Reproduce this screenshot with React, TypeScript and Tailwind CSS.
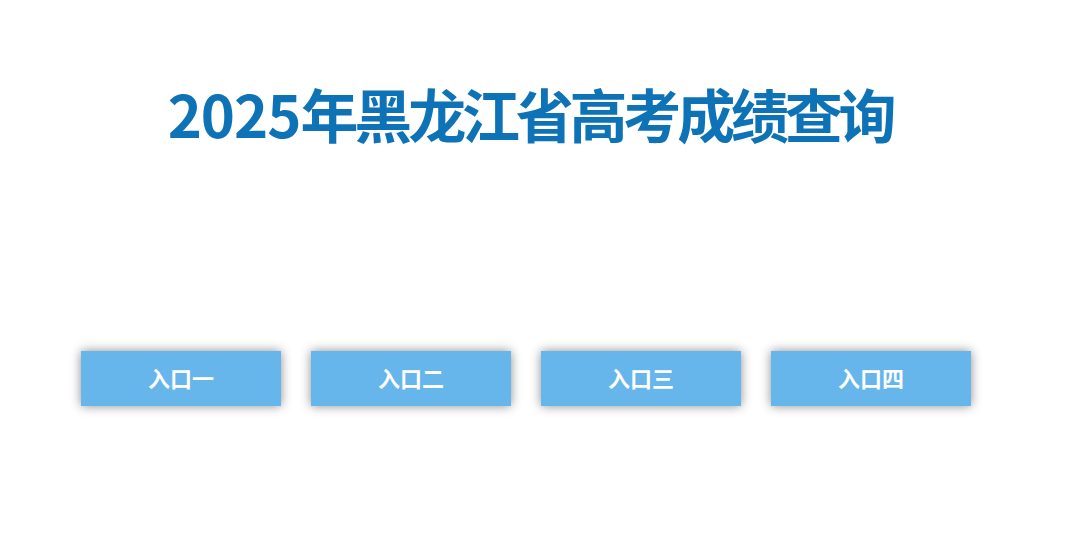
import React from 'react';

const entries = ['入口一', '入口二', '入口三', '入口四'];

const App: React.FC = () => {
  return (
    <div
      className="min-h-[535px] bg-white"
      style={{ fontFamily: '"Noto Sans CJK SC", "Noto Sans", sans-serif' }}
    >
      <h1 className="w-[1060px] pt-[73px] text-center text-[58px] font-bold leading-[80px] tracking-[-4.2px] text-[#0e72b6]">
        <span className="tracking-[-1px]">2025</span>年黑龙江省高考成绩查询
      </h1>
      <div className="mt-[198px] flex gap-[30px] pl-[81px]">
        {entries.map((name) => (
          <a
            key={name}
            href="#"
            className="flex h-[55px] w-[200px] items-center justify-center pb-[2px] text-[22px] font-bold text-white bg-[#66b6ec] shadow-[0_0_10px_rgba(0,0,0,0.45)]"
          >
            {name}
          </a>
        ))}
      </div>
    </div>
  );
};

export default App;
